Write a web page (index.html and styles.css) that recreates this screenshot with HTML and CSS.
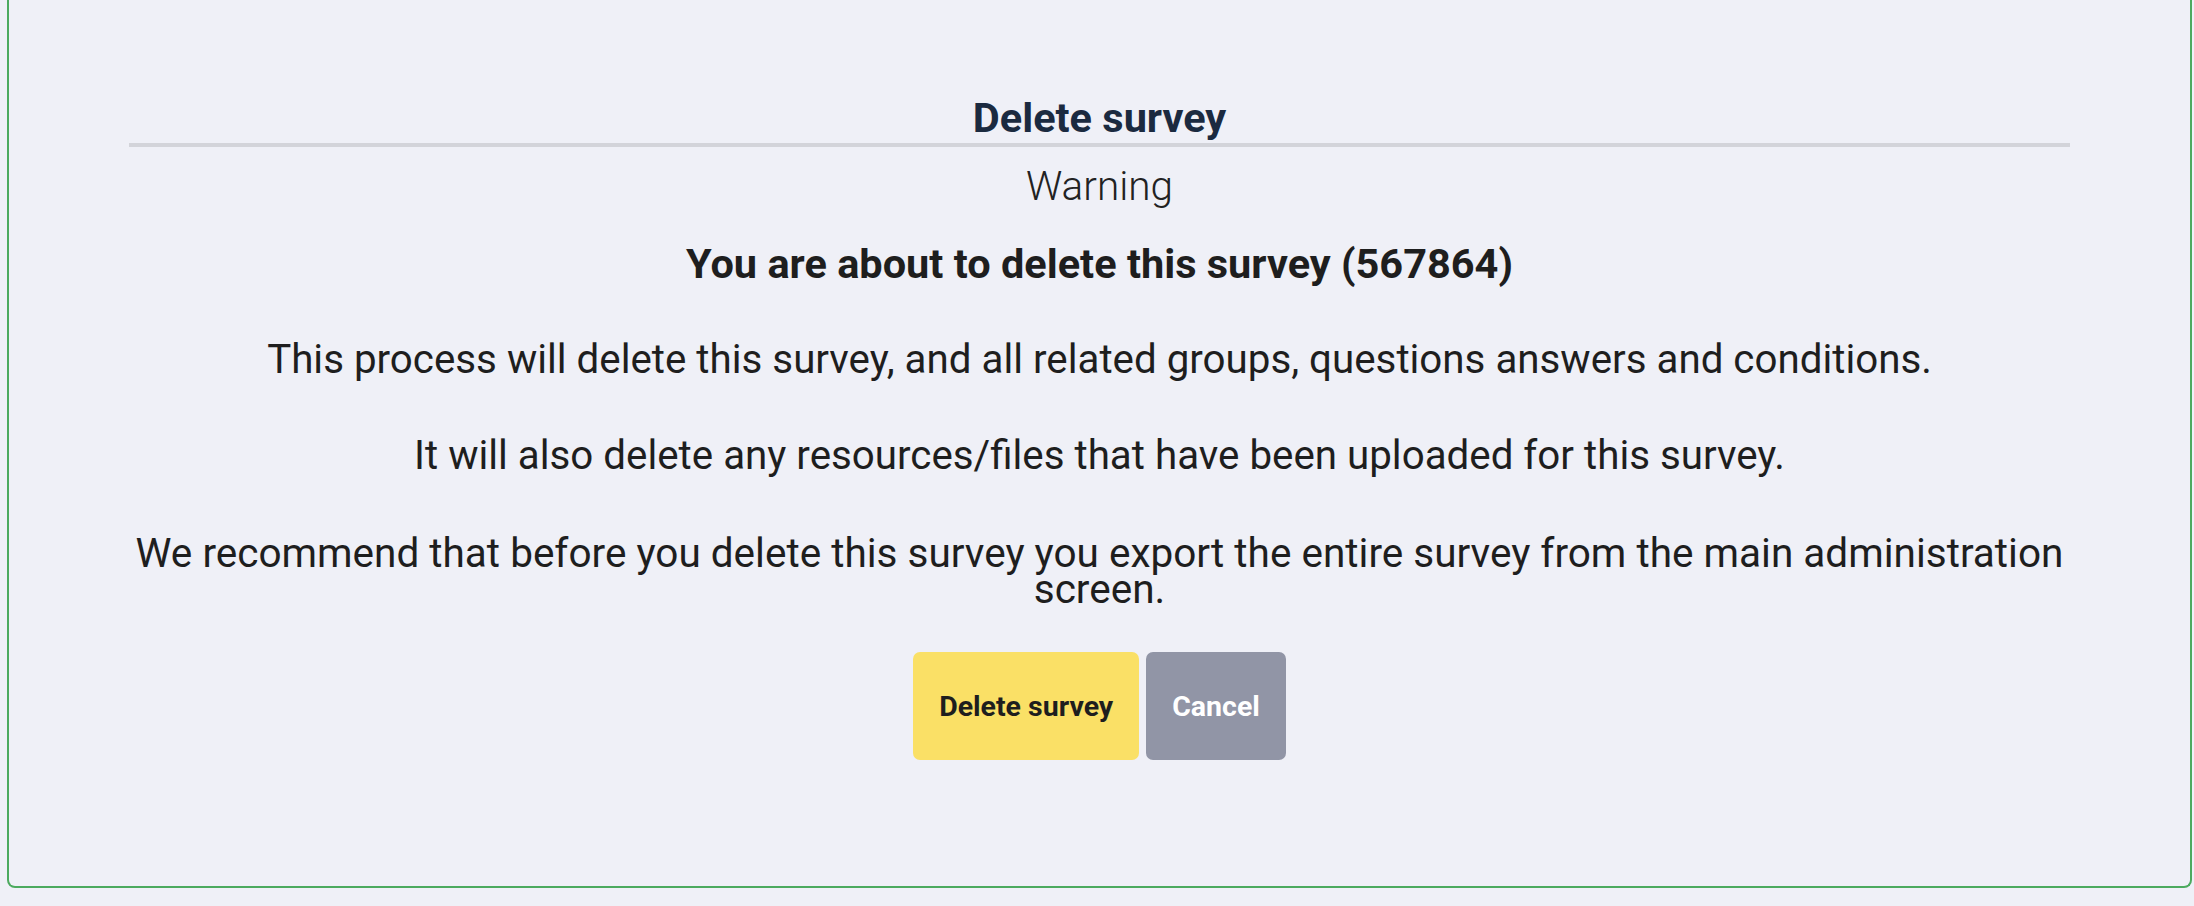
FILE: index.html
```html
<!DOCTYPE html>
<html lang="en">
<head>
<meta charset="utf-8">
<title>Delete survey</title>
<link rel="stylesheet" href="styles.css">
</head>
<body>
<div class="panel">
  <h3 class="title">Delete survey</h3>
  <hr class="divider">
  <p class="warning">Warning</p>
  <p class="lead">You are about to delete this survey (567864)</p>
  <p class="text">This process will delete this survey, and all related groups, questions answers and conditions.</p>
  <p class="text">It will also delete any resources/files that have been uploaded for this survey.</p>
  <p class="text last">We recommend that before you delete this survey you export the entire survey from the main administration screen.</p>
  <div class="actions">
    <button class="btn btn-delete" type="button">Delete survey</button>
    <button class="btn btn-cancel" type="button">Cancel</button>
  </div>
</div>
</body>
</html>
```
FILE: styles.css
```css
html, body {
  background: #eff0f7;
}
body {
  margin: 0 2px 18px 7px;
  font-family: Roboto, "Liberation Sans", sans-serif;
  color: #1e1e1e;
}
.panel {
  box-sizing: border-box;
  height: 888px;
  border: 2px solid #4caa5f;
  border-top: 0;
  border-radius: 0 0 8px 8px;
  padding: 98px 120px 0;
  text-align: center;
}
.title {
  margin: 0;
  font-size: 41.5px;
  line-height: 40px;
  font-weight: 700;
  color: #1b2a40;
}
.divider {
  margin: 5px 0 0;
  border: 0;
  height: 4px;
  background: #d3d4da;
}
.warning {
  margin: 19px 0 0;
  font-size: 40.5px;
  line-height: 40px;
  font-weight: 300;
  color: #222;
}
.lead {
  margin: 38px 0 0;
  font-size: 41.5px;
  line-height: 40px;
  font-weight: 700;
}
.text {
  margin: 56px 0 0;
  font-size: 40.3px;
  line-height: 40px;
}
.text.last {
  margin-top: 59px;
  font-size: 40.5px;
  line-height: 36px;
}
.actions {
  margin-top: 45px;
  display: flex;
  justify-content: center;
  gap: 7px;
}
.btn {
  height: 108px;
  border: 0;
  border-radius: 7px;
  padding: 0 26px;
  font-family: inherit;
  font-size: 28.5px;
  font-weight: 700;
}
.btn-delete {
  background: #fae066;
  color: #1e1e1e;
}
.btn-cancel {
  background: #9195a6;
  color: #fff;
}
```
